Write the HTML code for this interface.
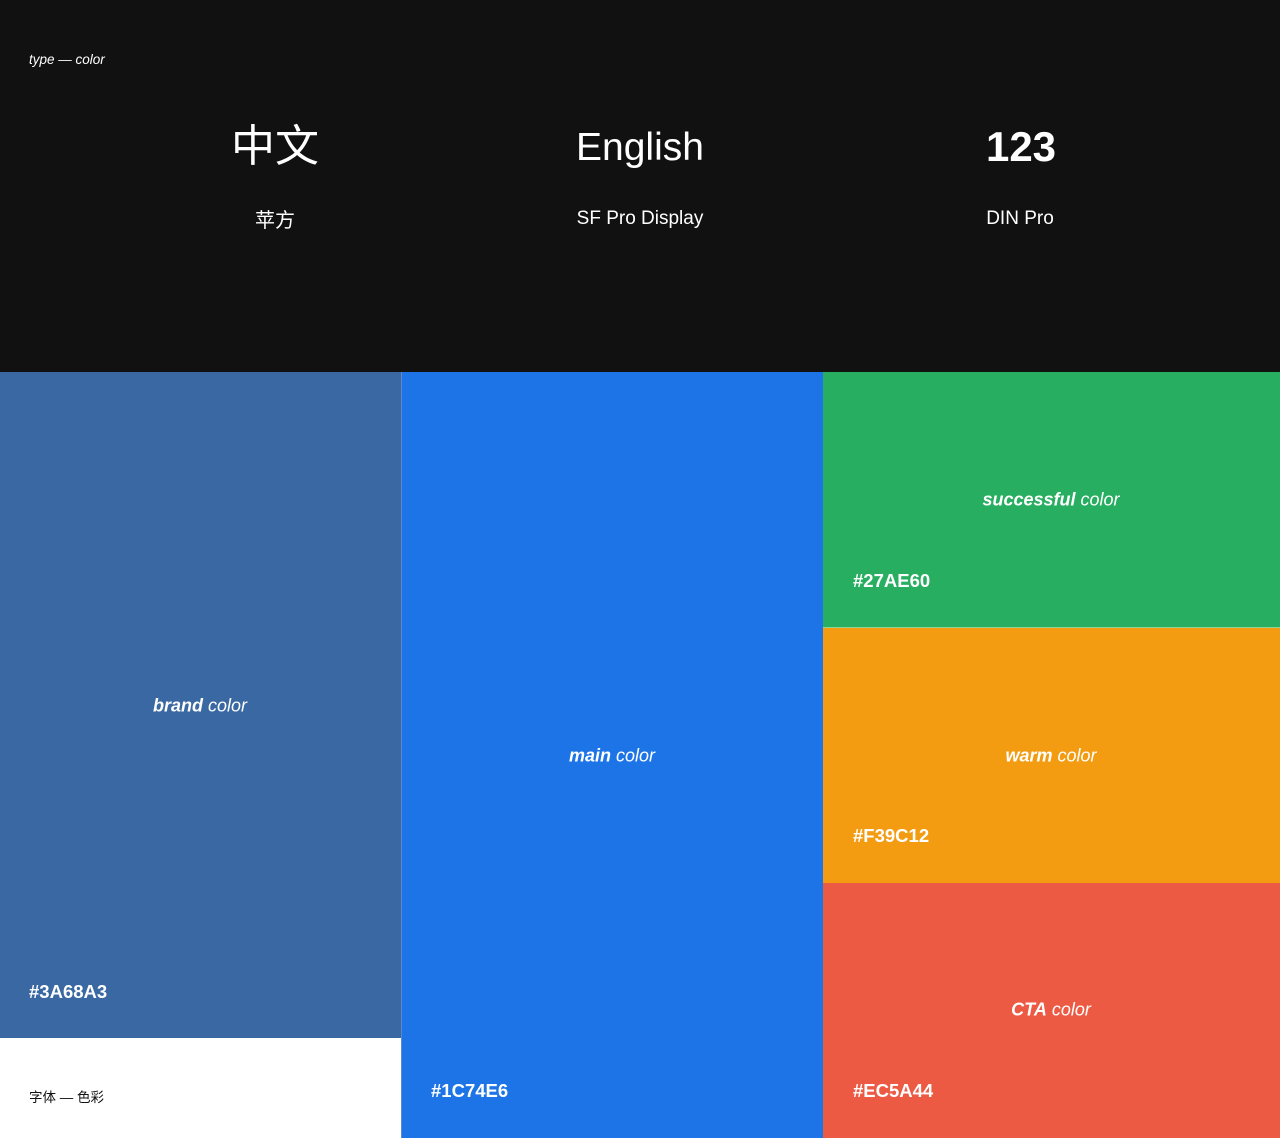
<!DOCTYPE html>
<html><head><meta charset="utf-8"><style>
*{margin:0;padding:0;box-sizing:border-box}
body{width:1280px;height:1138px;position:relative;background:#111;font-family:"Liberation Sans","Noto Sans CJK SC",sans-serif;color:#fff;overflow:hidden}
.a{position:absolute}
.c{text-align:center;transform:translateX(-50%);white-space:nowrap}
.lbl{font-style:italic;font-size:18px;transform:translate(-50%,-50%);white-space:nowrap}
.lbl b{font-weight:bold}
.hex{font-weight:bold;font-size:18.5px;letter-spacing:0px}
</style></head><body>
<div class="a" style="left:29px;top:52px;font-size:13.5px;font-style:italic">type — color</div>
<div class="a c" style="left:275px;top:120px;font-size:44px;line-height:54px">中文</div>
<div class="a c" style="left:275px;top:204px;font-size:20px">苹方</div>
<div class="a c" style="left:640px;top:121px;font-size:39px;line-height:54px">English</div>
<div class="a c" style="left:640px;top:208px;font-size:19px">SF Pro Display</div>
<div class="a c" style="left:1021px;top:120px;font-size:42px;line-height:54px;font-weight:bold">123</div>
<div class="a c" style="left:1020px;top:208px;font-size:19px">DIN Pro</div>

<div class="a" style="left:0;top:372px;width:401px;height:666px;background:#3A68A3"></div>
<div class="a" style="left:0;top:1038px;width:401px;height:100px;background:#fff"></div>
<div class="a" style="left:401px;top:372px;width:1px;height:766px;background:#5a8ad0"></div>
<div class="a" style="left:402px;top:372px;width:421px;height:766px;background:#1C74E6"></div>
<div class="a" style="left:823px;top:372px;width:457px;height:255px;background:#27AE60"></div>
<div class="a" style="left:823px;top:627px;width:457px;height:1px;background:#8fd48f"></div>
<div class="a" style="left:823px;top:628px;width:457px;height:255px;background:#F39C12"></div>
<div class="a" style="left:823px;top:883px;width:457px;height:255px;background:#EC5A44"></div>

<div class="a lbl" style="left:200px;top:706px"><b>brand</b> color</div>
<div class="a hex" style="left:29px;top:981px">#3A68A3</div>
<div class="a" style="left:29px;top:1086px;font-size:13.5px;color:#111">字体 — 色彩</div>
<div class="a lbl" style="left:612px;top:756px"><b>main</b> color</div>
<div class="a hex" style="left:431px;top:1080px">#1C74E6</div>
<div class="a lbl" style="left:1051px;top:500px"><b>successful</b> color</div>
<div class="a hex" style="left:853px;top:570px">#27AE60</div>
<div class="a lbl" style="left:1051px;top:756px"><b>warm</b> color</div>
<div class="a hex" style="left:853px;top:825px">#F39C12</div>
<div class="a lbl" style="left:1051px;top:1010px"><b>CTA</b> color</div>
<div class="a hex" style="left:853px;top:1080px">#EC5A44</div>
</body></html>
